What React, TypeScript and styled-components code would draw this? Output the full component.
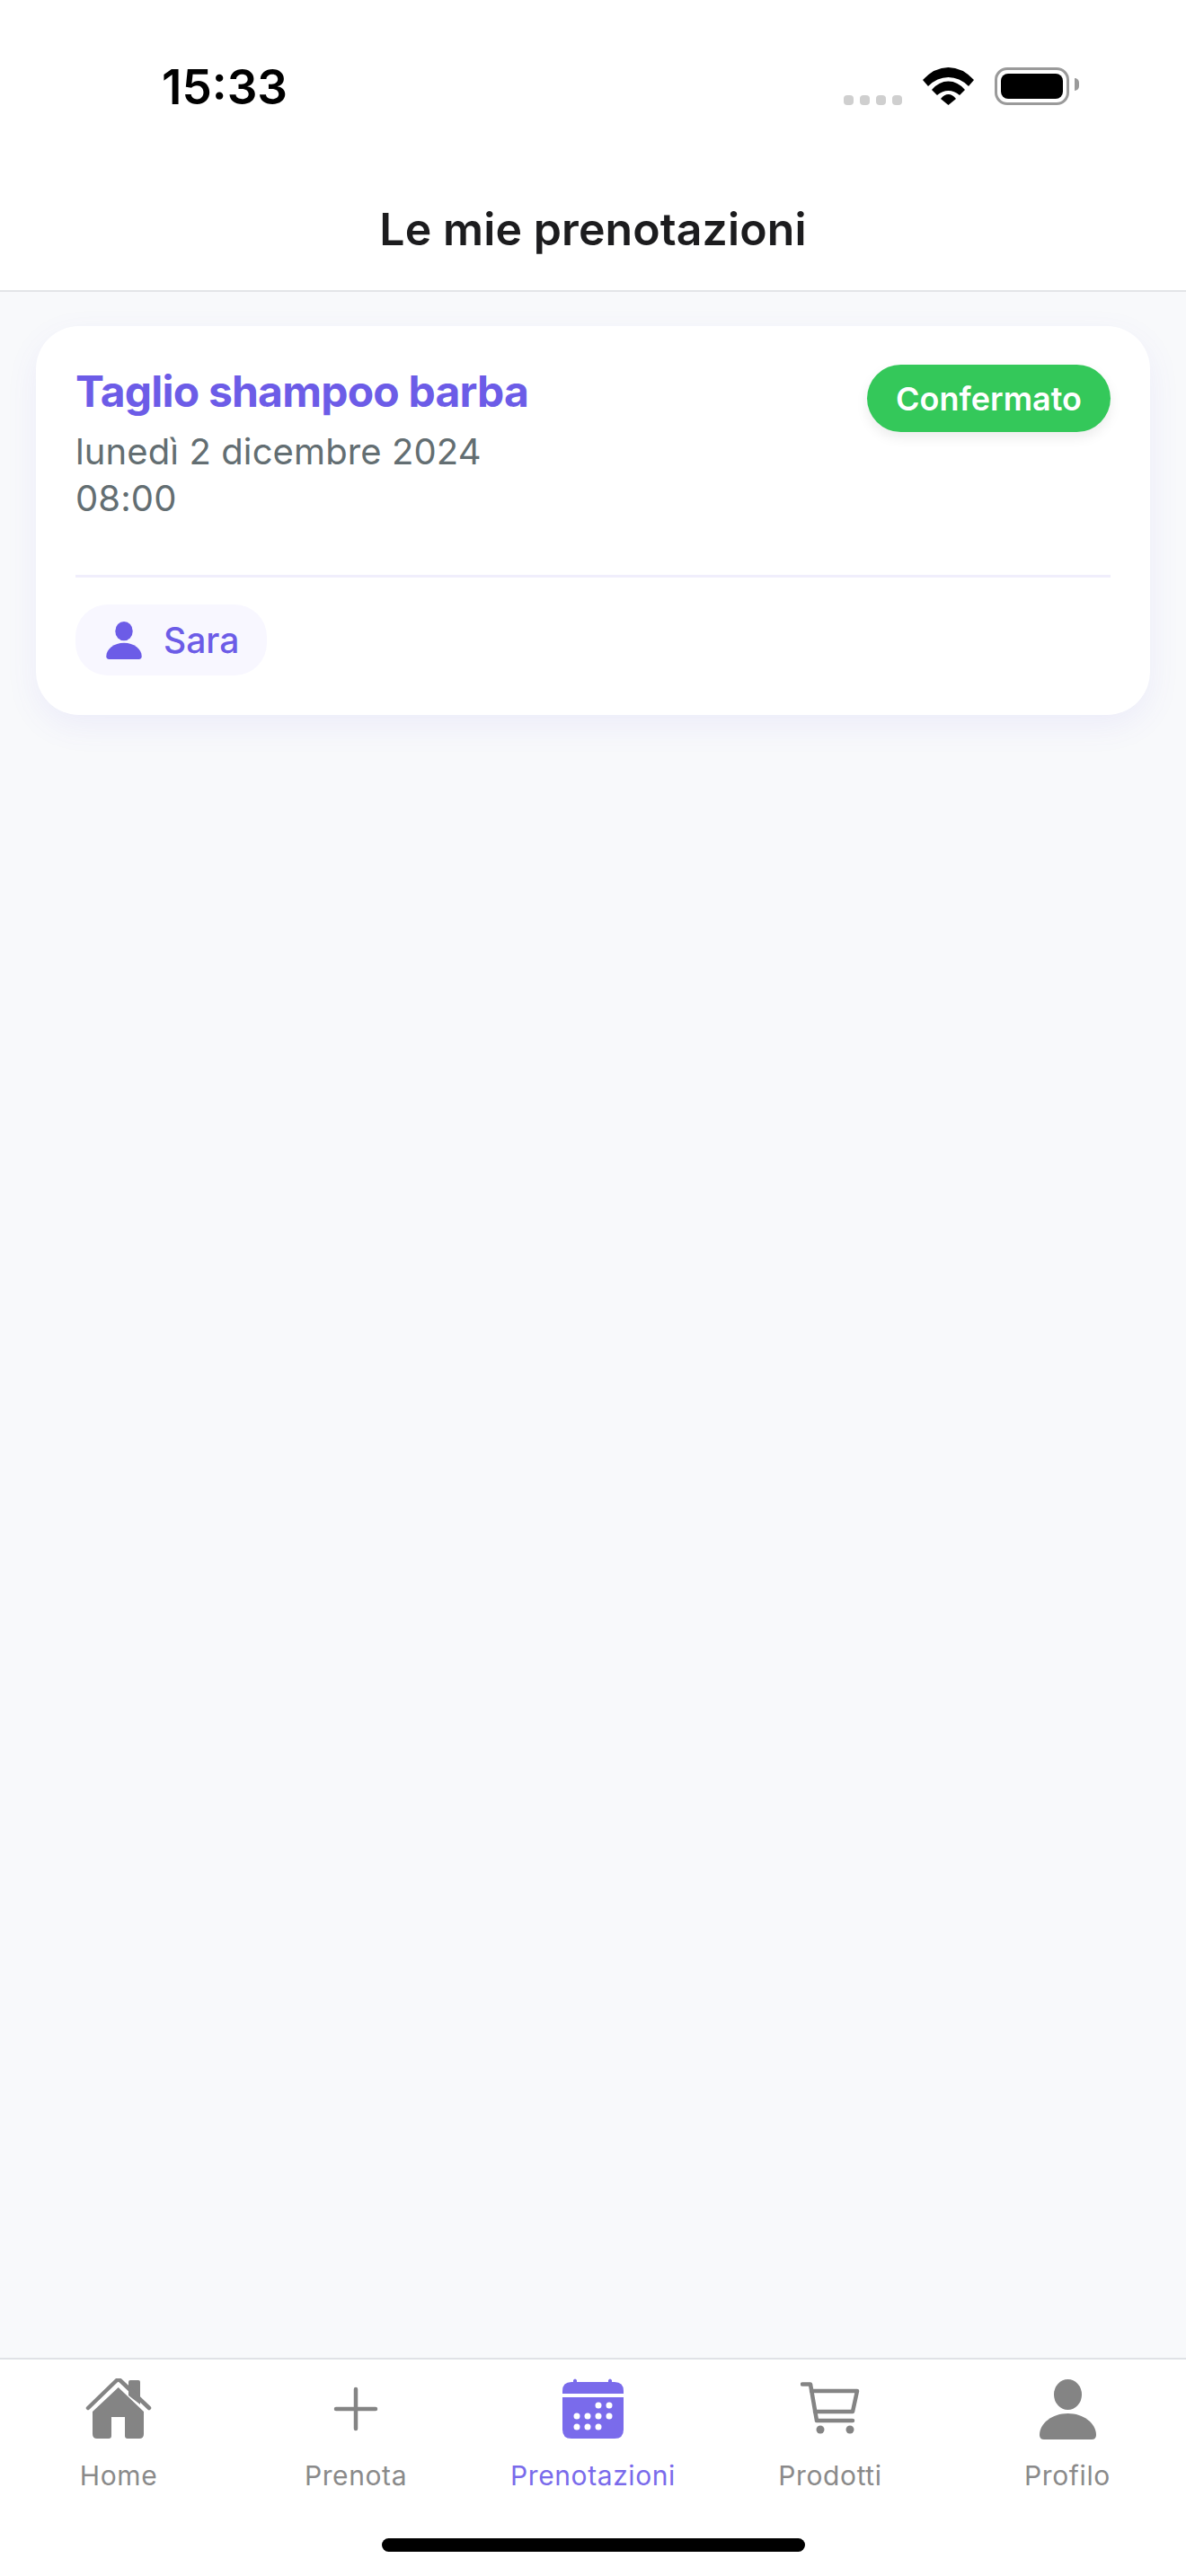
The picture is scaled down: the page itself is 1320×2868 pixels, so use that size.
import React from "react";
import styled, { createGlobalStyle } from "styled-components";

const PURPLE = "#6c5ce7";
const TAB_ACTIVE = "#7a6beb";
const GREY = "#848484";

const GlobalStyle = createGlobalStyle`
  html, body {
    margin: 0;
    padding: 0;
    background: #f8f9fb;
  }
  * {
    box-sizing: border-box;
  }
`;

function PersonIcon({ size, height, color }: { size: number; height: number; color: string }) {
  return (
    <svg width={size} height={height} viewBox="0 0 63 67" fill={color}>
      <ellipse cx="31.5" cy="17" rx="15.5" ry="17" />
      <path d="M0 62C0 49 14 38 31.5 38C49 38 63 49 63 62Q63 67 58 67H5Q0 67 0 62Z" />
    </svg>
  );
}

function HomeIcon() {
  return (
    <svg width="74" height="68" viewBox="0 0 74 68" fill={GREY}>
      <path d="M48 19V4Q48 2 50 2H59Q61 2 61 4V29Z" />
      <path d="M3 33L34.5 2.5Q36.7 .5 39 2.5L71 33" fill="none" stroke={GREY} strokeWidth="4.5" strokeLinecap="round" strokeLinejoin="round" />
      <path d="M8 37L36.7 10L65 37V62Q65 67 60 67H47Q44 67 44 64V43H29V64Q29 67 26 67H13Q8 67 8 62Z" />
    </svg>
  );
}

function PlusIcon() {
  return (
    <svg width="50" height="50" viewBox="0 0 50 50" fill="none" stroke={GREY} strokeWidth="4.5" strokeLinecap="round">
      <path d="M25 3V47M3 25H47" />
    </svg>
  );
}

function CalendarIcon() {
  const dots = [
    [40, 30], [52, 30],
    [16, 42], [28, 42], [40, 42], [52, 42],
    [16, 54], [28, 54], [40, 54],
  ];
  return (
    <svg width="68" height="68" viewBox="0 0 68 68" fill={TAB_ACTIVE}>
      <path d="M12 4V2Q14 -1 16 2V4H51V2Q53 -1 55 2V4H58Q68 4 68 14V17H0V14Q0 4 10 4Z" />
      <path d="M0 21H68V57Q68 67 58 67H10Q0 67 0 57Z" />
      {dots.map(([cx, cy]) => (
        <circle key={`${cx}-${cy}`} cx={cx} cy={cy} r="3.5" fill="#fff" />
      ))}
    </svg>
  );
}

function CartIcon() {
  return (
    <svg width="66" height="60" viewBox="0 0 66 60" fill="none" stroke={GREY} strokeWidth="4.5" strokeLinecap="round" strokeLinejoin="round">
      <path d="M2 2.5H11L18 43H58" />
      <path d="M12 10H63L58 33H16" />
      <circle cx="22" cy="53" r="4.5" fill={GREY} stroke="none" />
      <circle cx="55" cy="53" r="4.5" fill={GREY} stroke="none" />
    </svg>
  );
}

const tabs = [
  { label: "Home", icon: <HomeIcon /> },
  { label: "Prenota", icon: <PlusIcon /> },
  { label: "Prenotazioni", icon: <CalendarIcon />, active: true },
  { label: "Prodotti", icon: <CartIcon /> },
  { label: "Profilo", icon: <PersonIcon size={63} height={67} color={GREY} /> },
];

export default function App() {
  return (
    <Screen>
      <GlobalStyle />
      <TopBar>
        <StatusBar>
          <Clock>15:33</Clock>
          <StatusIcons>
            <SignalDots>
              <SignalDot />
              <SignalDot />
              <SignalDot />
              <SignalDot />
            </SignalDots>
            <svg width="57" height="42" viewBox="0 0 57 42" fill="#000">
              <path d="M0 14Q13 0 28.5 0T57 14L51 21Q41 11 28.5 11T6 21Z" />
              <path d="M10 25Q18 15.500 28.500 15.500T47 25L41 31Q35 26 28.500 26T16 31Z" />
              <path d="M20 35Q24 30 28.500 30T37 35L28.500 42Z" />
            </svg>
            <Battery>
              <BatteryFill />
            </Battery>
          </StatusIcons>
        </StatusBar>
        <PageTitle>Le mie prenotazioni</PageTitle>
      </TopBar>

      <Content>
        <Card>
          <CardTop>
            <CardInfo>
              <ServiceName>Taglio shampoo barba</ServiceName>
              <DateLine>lunedì 2 dicembre 2024</DateLine>
              <DateLine>08:00</DateLine>
            </CardInfo>
            <StatusBadge>Confermato</StatusBadge>
          </CardTop>
          <Divider />
          <StaffChip>
            <PersonIcon size={40} height={42} color={PURPLE} />
            <StaffName>Sara</StaffName>
          </StaffChip>
        </Card>
      </Content>

      <TabBar>
        <TabRow>
          {tabs.map((tab) => (
            <Tab key={tab.label}>
              <TabIcon>{tab.icon}</TabIcon>
              <TabLabel $active={tab.active}>{tab.label}</TabLabel>
            </Tab>
          ))}
        </TabRow>
        <HomeIndicator />
      </TabBar>
    </Screen>
  );
}

const Screen = styled.div`
  width: 1320px;
  height: 2868px;
  display: flex;
  flex-direction: column;
  background: #f8f9fb;
  font-family: Inter, "Noto Sans", sans-serif;
  overflow: hidden;
`;

const TopBar = styled.header`
  height: 325px;
  background: #fff;
  border-bottom: 2px solid #e3e5e8;
`;

const StatusBar = styled.div`
  height: 226px;
  padding: 75px 130px 0 180px;
  display: flex;
  justify-content: space-between;
  align-items: flex-start;
`;

const Clock = styled.div`
  font-size: 53px;
  line-height: 45px;
  font-weight: 600;
  color: #000;
`;

const StatusIcons = styled.div`
  display: flex;
  align-items: flex-end;
  gap: 23px;
`;

const SignalDots = styled.div`
  display: flex;
  gap: 7px;
`;

const SignalDot = styled.span`
  width: 11px;
  height: 11px;
  border-radius: 4px;
  background: #cfcfcf;
`;

const Battery = styled.div`
  position: relative;
  width: 83px;
  height: 42px;
  padding: 4px;
  border: 3px solid #9a9a9a;
  border-radius: 14px;

  &::after {
    content: "";
    position: absolute;
    right: -14px;
    top: 9px;
    width: 5px;
    height: 14px;
    background: #9a9a9a;
    border-radius: 0 5px 5px 0;
  }
`;

const BatteryFill = styled.div`
  width: 100%;
  height: 100%;
  background: #000;
  border-radius: 8px;
`;

const PageTitle = styled.h1`
  margin: 0;
  text-align: center;
  font-size: 50px;
  line-height: 58px;
  font-weight: 600;
  letter-spacing: 0.1px;
  color: #1c1c1e;
`;

const Content = styled.main`
  flex: 1;
  padding: 38px 40px;
`;

const Card = styled.section`
  height: 433px;
  padding: 43px 44px 0;
  background: #fff;
  border-radius: 48px;
  box-shadow: 0 12px 36px rgba(108, 92, 231, 0.08);
`;

const CardTop = styled.div`
  height: 234px;
  display: flex;
  justify-content: space-between;
  align-items: flex-start;
`;

const CardInfo = styled.div`
  display: flex;
  flex-direction: column;
`;

const ServiceName = styled.h2`
  margin: 1px 0 12px;
  font-size: 48px;
  line-height: 58px;
  font-weight: 700;
  letter-spacing: -0.8px;
  color: ${PURPLE};
`;

const DateLine = styled.div`
  font-size: 40px;
  line-height: 52px;
  font-weight: 400;
  letter-spacing: 0.1px;
  color: #636e72;
`;

const StatusBadge = styled.span`
  height: 75px;
  padding: 0 32px;
  display: flex;
  align-items: center;
  border-radius: 38px;
  background: #34c85a;
  color: #fff;
  font-size: 36px;
  font-weight: 600;
  box-shadow: 0 6px 14px rgba(0, 0, 0, 0.08);
`;

const Divider = styled.div`
  height: 3px;
  background: #f0eefc;
`;

const StaffChip = styled.div`
  margin-top: 30px;
  width: 213px;
  height: 79px;
  padding-left: 34px;
  display: flex;
  align-items: center;
  gap: 24px;
  border-radius: 36px;
  background: #f8f7ff;
`;

const StaffName = styled.span`
  font-size: 39px;
  font-weight: 500;
  color: ${PURPLE};
`;

const TabBar = styled.footer`
  height: 243px;
  background: #fff;
  border-top: 2px solid #e0e2e6;
  display: flex;
  flex-direction: column;
  align-items: center;
`;

const TabRow = styled.nav`
  width: 100%;
  padding-top: 21px;
  display: grid;
  grid-template-columns: repeat(5, 1fr);
`;

const Tab = styled.div`
  display: flex;
  flex-direction: column;
  align-items: center;
  gap: 22px;
`;

const TabIcon = styled.div`
  height: 68px;
  display: flex;
  align-items: center;
  justify-content: center;
`;

const TabLabel = styled.span<{ $active?: boolean }>`
  font-size: 30px;
  line-height: 36px;
  letter-spacing: 0.6px;
  font-weight: 400;
  color: ${(props) => (props.$active ? TAB_ACTIVE : "#8a8a8a")};
`;

const HomeIndicator = styled.div`
  margin-top: 52px;
  width: 471px;
  height: 15px;
  border-radius: 8px;
  background: #000;
`;
